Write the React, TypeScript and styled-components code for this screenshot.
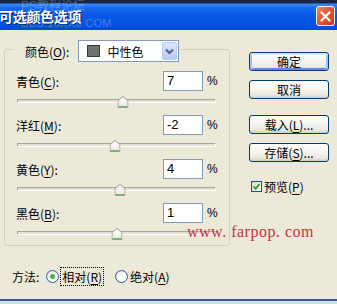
import styled, { createGlobalStyle } from "styled-components"

const GlobalStyle = createGlobalStyle`
  html, body {
    margin: 0;
    padding: 0;
    background: #ece9d8;
  }
  body {
    font-family: "Noto Sans CJK SC", "Noto Sans", sans-serif;
    font-size: 12px;
    color: #000;
  }
`

const channels = [
  { name: "青色", key: "C", value: 7 },
  { name: "洋红", key: "M", value: -2 },
  { name: "黄色", key: "Y", value: 4 },
  { name: "黑色", key: "B", value: 1 },
]

const App = () => {
  return (
    <>
      <GlobalStyle />
      <StyledWindow>
        <StyledTitleBar>
          <StyledTitle>可选颜色选项</StyledTitle>
          <StyledTitleMark>
            <span>PS教程论坛</span>
            <span>BBS.16XX8.COM</span>
          </StyledTitleMark>
          <StyledClose aria-label="关闭">
            <svg width="11" height="11" viewBox="0 0 11 11">
              <path
                d="M1.5 1.5 L9.5 9.5 M9.5 1.5 L1.5 9.5"
                stroke="#fff"
                strokeWidth="2.2"
                strokeLinecap="round"
              />
            </svg>
          </StyledClose>
        </StyledTitleBar>

        <StyledBody>
          <StyledLeft>
            <StyledGroup>
              <StyledGroupHeader>
                <StyledLabel>
                  颜色(<u>O</u>):
                </StyledLabel>
                <StyledCombo>
                  <StyledSwatch />
                  <StyledComboText>中性色</StyledComboText>
                  <StyledComboButton>
                    <svg width="9" height="7" viewBox="0 0 9 7">
                      <path
                        d="M1 1.5 L4.5 5 L8 1.5"
                        stroke="#4d6185"
                        strokeWidth="2"
                        fill="none"
                      />
                    </svg>
                  </StyledComboButton>
                </StyledCombo>
              </StyledGroupHeader>

              <StyledRows>
                {channels.map((c) => (
                  <StyledRow key={c.key}>
                    <StyledLine>
                      <StyledLabel>
                        {c.name}(<u>{c.key}</u>):
                      </StyledLabel>
                      <StyledInput>{c.value}</StyledInput>
                      <StyledPercent>%</StyledPercent>
                    </StyledLine>
                    <StyledSlider>
                      <StyledTrack />
                      <StyledThumb style={{ left: `${(c.value + 100) / 2}%` }}>
                        <svg width="11" height="12" viewBox="0 0 11 12">
                          <defs>
                            <linearGradient id={`tg${c.key}`} x1="0" y1="0" x2="0" y2="1">
                              <stop offset="0" stopColor="#ffffff" />
                              <stop offset="1" stopColor="#e8e6dc" />
                            </linearGradient>
                          </defs>
                          <path
                            d="M0.5 4.5 L5.5 0.5 L10.5 4.5 L10.5 11.5 L0.5 11.5 Z"
                            fill={`url(#tg${c.key})`}
                            stroke="#9a9a92"
                          />
                          <path d="M1.5 10.5 H9.5" stroke="#5cc466" strokeWidth="1" />
                        </svg>
                      </StyledThumb>
                    </StyledSlider>
                  </StyledRow>
                ))}
              </StyledRows>
            </StyledGroup>

            <StyledMethod>
              <span>方法:</span>
              <StyledRadio $checked />
              <StyledFocus>
                相对(<u>R</u>)
              </StyledFocus>
              <StyledRadio />
              <span>
                绝对(<u>A</u>)
              </span>
            </StyledMethod>
          </StyledLeft>

          <StyledRight>
            <StyledButton $default>确定</StyledButton>
            <StyledButton>取消</StyledButton>
            <StyledButton $gapTop={16}>
              载入(<u>L</u>)...
            </StyledButton>
            <StyledButton>
              存储(<u>S</u>)...
            </StyledButton>
            <StyledCheckRow>
              <StyledCheckbox>
                <svg width="9" height="9" viewBox="0 0 9 9">
                  <path
                    d="M1.5 4.5 L3.6 6.8 L7.6 2"
                    stroke="#21a121"
                    strokeWidth="1.8"
                    fill="none"
                  />
                </svg>
              </StyledCheckbox>
              <span>
                预览(<u>P</u>)
              </span>
            </StyledCheckRow>
          </StyledRight>

          <StyledWatermark>www. farpop. com</StyledWatermark>
        </StyledBody>

        <StyledBottomFrame />
      </StyledWindow>
    </>
  )
}

const StyledWindow = styled.div`
  position: relative;
  width: 337px;
  height: 304px;
  display: flex;
  flex-direction: column;
  background: #ece9d8;
  overflow: hidden;
`

const StyledTitleBar = styled.div`
  position: relative;
  height: 30px;
  flex: none;
  display: flex;
  align-items: center;
  padding-top: 2px;
  box-sizing: border-box;
  background: linear-gradient(
    to bottom,
    #1a2540 0,
    #1a2540 3px,
    #3d8af7 4px,
    #1766ec 8px,
    #0758e4 16px,
    #0654e0 24px,
    #0349cf 30px
  );
`

const StyledTitle = styled.span`
  margin-left: -1px;
  font-size: 14px;
  font-weight: 700;
  letter-spacing: -0.3px;
  color: #fff;
  text-shadow: 1px 1px 0 #0a1e6e;
`

const StyledTitleMark = styled.div`
  position: absolute;
  left: 21px;
  top: 0;
  display: flex;
  flex-direction: column;
  line-height: 12px;
  font-family: "Liberation Sans", "Noto Sans CJK SC", sans-serif;
  color: rgba(220, 230, 255, 0.3);
  span:first-child {
    font-size: 12px;
  }
  span:last-child {
    margin-top: 5px;
    font-size: 11px;
    letter-spacing: 0.3px;
  }
`

const StyledClose = styled.div`
  margin-left: auto;
  margin-right: 2px;
  width: 19px;
  height: 20px;
  box-sizing: border-box;
  border: 1px solid #f4f4f4;
  border-radius: 3px;
  display: flex;
  align-items: center;
  justify-content: center;
  background: linear-gradient(135deg, #ec8a6a 0%, #df5a32 45%, #c63a14 100%);
`

const StyledBody = styled.div`
  position: relative;
  flex: 1;
  display: flex;
  align-items: flex-start;
`

const StyledLeft = styled.div`
  width: 226px;
  margin: 19px 0 0 4px;
  display: flex;
  flex-direction: column;
`

const StyledGroup = styled.div`
  border: 1px solid #d0d0bf;
  border-radius: 3px;
  padding: 0 12px 2px 11px;
`

const StyledGroupHeader = styled.div`
  margin: -10px 0 0 -3px;
  width: max-content;
  padding: 0 1px 0 12px;
  height: 22px;
  display: flex;
  align-items: center;
  gap: 9px;
  background: #ece9d8;
`

const StyledLabel = styled.span`
  white-space: nowrap;
  u {
    text-decoration-thickness: 1px;
    text-underline-offset: 2px;
  }
`

const StyledCombo = styled.div`
  width: 101px;
  height: 22px;
  box-sizing: border-box;
  border: 1px solid #7f9db9;
  background: #fff;
  display: flex;
  align-items: center;
  padding: 0 1px 0 8px;
`

const StyledSwatch = styled.span`
  width: 13px;
  height: 12px;
  box-sizing: border-box;
  border: 1px solid #3b3b3b;
  background: #717171;
`

const StyledComboText = styled.span`
  margin-left: 7px;
`

const StyledComboButton = styled.span`
  margin-left: auto;
  width: 15px;
  height: 18px;
  box-sizing: border-box;
  border: 1px solid #b9cbf3;
  border-radius: 2px;
  display: flex;
  align-items: center;
  justify-content: center;
  background: linear-gradient(to bottom, #dbe6fd, #b8cbf8);
`

const StyledRows = styled.div`
  margin-top: 9px;
  display: flex;
  flex-direction: column;
  gap: 4px;
`

const StyledRow = styled.div`
  display: flex;
  flex-direction: column;
`

const StyledLine = styled.div`
  height: 20px;
  display: grid;
  grid-template-columns: 1fr 40px 14px;
  align-items: center;
`

const StyledInput = styled.div`
  height: 20px;
  box-sizing: border-box;
  border: 1px solid #7f9db9;
  background: #fff;
  padding: 0 3px;
  line-height: 18px;
  font-family: "Liberation Sans", sans-serif;
  font-size: 13px;
`

const StyledPercent = styled.span`
  padding-left: 4px;
  font-family: "Liberation Sans", sans-serif;
  font-size: 12px;
`

const StyledSlider = styled.div`
  position: relative;
  height: 20px;
  margin: 0 1px;
  display: flex;
  align-items: center;
`

const StyledTrack = styled.div`
  flex: 1;
  height: 2px;
  border-top: 1px solid #a7a69a;
  border-left: 1px solid #a7a69a;
  border-bottom: 1px solid #ffffff;
  border-right: 1px solid #ffffff;
  border-radius: 1px;
  background: #e4e1d2;
`

const StyledThumb = styled.div`
  position: absolute;
  top: 5px;
  width: 11px;
  height: 12px;
  transform: translateX(-50%);
  svg {
    display: block;
  }
`

const StyledMethod = styled.div`
  margin-top: 21px;
  padding-left: 8px;
  height: 18px;
  display: flex;
  align-items: center;
  white-space: nowrap;
  > span:first-child {
    margin-right: 7px;
  }
  u {
    text-underline-offset: 2px;
  }
`

const StyledRadio = styled.span<{ $checked?: boolean }>`
  width: 13px;
  height: 13px;
  box-sizing: border-box;
  border-radius: 50%;
  border: 1px solid #2d5f95;
  background: radial-gradient(circle at 60% 65%, #ffffff 30%, #dcdad0 100%);
  margin-right: 2px;
  display: flex;
  align-items: center;
  justify-content: center;
  &::after {
    content: "";
    display: ${({ $checked }) => ($checked ? "block" : "none")};
    width: 5px;
    height: 5px;
    border-radius: 50%;
    background: #3fb64a;
  }
`

const StyledFocus = styled.span`
  padding: 0 1px;
  height: 17px;
  line-height: 17px;
  outline: 1px dotted #000;
  margin-right: 12px;
`

const StyledRight = styled.div`
  margin: 22px 0 0 19px;
  width: 80px;
  display: flex;
  flex-direction: column;
  gap: 9px;
`

const StyledButton = styled.div<{ $default?: boolean; $gapTop?: number }>`
  height: 19px;
  box-sizing: border-box;
  margin-top: ${({ $gapTop }) => ($gapTop ? `${$gapTop - 9}px` : "0")};
  border: 1px solid #003c74;
  border-radius: 3px;
  display: flex;
  align-items: center;
  justify-content: center;
  white-space: nowrap;
  background: linear-gradient(
    to bottom,
    #ffffff 0%,
    #f6f5f0 45%,
    #ebe9e0 80%,
    #d6d0c5 100%
  );
  box-shadow: ${({ $default }) =>
    $default
      ? "inset 0 2px 0 #cee7ff, inset 2px 0 0 #a7bef5, inset -2px 0 0 #a7bef5, inset 0 -2px 0 #6982ee"
      : "inset 0 -1px 0 #d6d0c5"};
  u {
    text-underline-offset: 2px;
  }
`

const StyledCheckRow = styled.div`
  margin-top: 7px;
  display: flex;
  align-items: center;
  gap: 2px;
  padding-left: 2px;
  u {
    text-underline-offset: 2px;
  }
`

const StyledCheckbox = styled.span`
  width: 11px;
  height: 11px;
  box-sizing: border-box;
  border: 1px solid #1c5180;
  background: linear-gradient(135deg, #dcdad0, #ffffff);
  display: flex;
  align-items: center;
  justify-content: center;
`

const StyledWatermark = styled.div`
  position: absolute;
  left: 187px;
  top: 193px;
  font-family: "Liberation Serif", serif;
  font-size: 16px;
  letter-spacing: 0.5px;
  color: #c8323c;
  white-space: nowrap;
`

const StyledBottomFrame = styled.div`
  flex: none;
  height: 5px;
  box-sizing: border-box;
  border-top: 2px solid #3a5a9c;
  background: #cfdcf2;
`

export default App
